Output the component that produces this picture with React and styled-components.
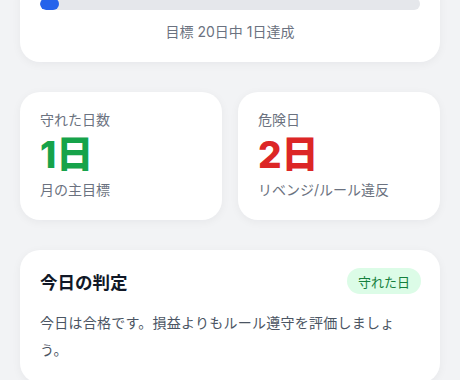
import React from "react";
import styled, { createGlobalStyle } from "styled-components";

const Global = createGlobalStyle`
  html, body { margin: 0; padding: 0; background: #f2f3f5; }
  body { font-family: Inter, "Noto Sans CJK JP", sans-serif; -webkit-font-smoothing: antialiased; }
`;

const Page = styled.div`
  display: flex;
  flex-direction: column;
  gap: 30px;
  padding: 0 20px 40px;
  margin-top: -22px;
`;

const Card = styled.section`
  background: #fff;
  border-radius: 20px;
  box-shadow: 0 2px 10px rgba(15, 23, 42, 0.05);
  padding: 20px;
`;

const Track = styled.div`
  height: 12px;
  border-radius: 6px;
  background: #e5e7eb;
  overflow: hidden;
`;

const Fill = styled.div`
  height: 100%;
  border-radius: 6px;
  background: #2563eb;
`;

const Caption = styled.div`
  margin-top: 12px;
  text-align: center;
  font-size: 14px;
  line-height: 20px;
  color: #6b7280;
`;

const StatGrid = styled.div`
  display: grid;
  grid-template-columns: 1fr 1fr;
  gap: 16px;
`;

const StatCard = styled(Card)`
  display: flex;
  flex-direction: column;
  padding: 18px 20px 20px;
`;

const StatLabel = styled.div`
  font-size: 14px;
  line-height: 20px;
  color: #6b7280;
`;

const StatValue = styled.div`
  font-size: 37px;
  line-height: 46px;
  font-weight: 800;
  color: ${(p) => p.$color};
  margin: 2px 0 2px;
`;

const StatSub = styled.div`
  font-size: 14px;
  line-height: 20px;
  color: #6b7280;
`;

const Header = styled.div`
  display: flex;
  align-items: center;
  justify-content: space-between;
`;

const Title = styled.h2`
  margin: 0;
  font-size: 17.5px;
  font-weight: 700;
  color: #111827;
`;

const Badge = styled.span`
  display: inline-flex;
  align-items: center;
  height: 26px;
  padding: 0 11px;
  border-radius: 13px;
  background: #dcfce7;
  color: #15803d;
  font-size: 13px;
  margin-right: -1px;
`;

const JudgeCard = styled(Card)`
  padding-top: 18px;
`;

const Body = styled.p`
  margin: 15px 0 0;
  font-size: 14px;
  letter-spacing: 0.25px;
  line-height: 27px;
  color: #4b5563;
`;

export default function App() {
  const progress = 1 / 20;
  return (
    <>
      <Global />
      <Page>
        <Card>
          <Track>
            <Fill style={{ width: `${progress * 100}%` }} />
          </Track>
          <Caption>目標 20日中 1日達成</Caption>
        </Card>
        <StatGrid>
          <StatCard>
            <StatLabel>守れた日数</StatLabel>
            <StatValue $color="#16a34a">1日</StatValue>
            <StatSub>月の主目標</StatSub>
          </StatCard>
          <StatCard>
            <StatLabel>危険日</StatLabel>
            <StatValue $color="#dc2626">2日</StatValue>
            <StatSub>リベンジ/ルール違反</StatSub>
          </StatCard>
        </StatGrid>
        <JudgeCard>
          <Header>
            <Title>今日の判定</Title>
            <Badge>守れた日</Badge>
          </Header>
          <Body>今日は合格です。損益よりもルール遵守を評価しましょう。</Body>
        </JudgeCard>
      </Page>
    </>
  );
}
